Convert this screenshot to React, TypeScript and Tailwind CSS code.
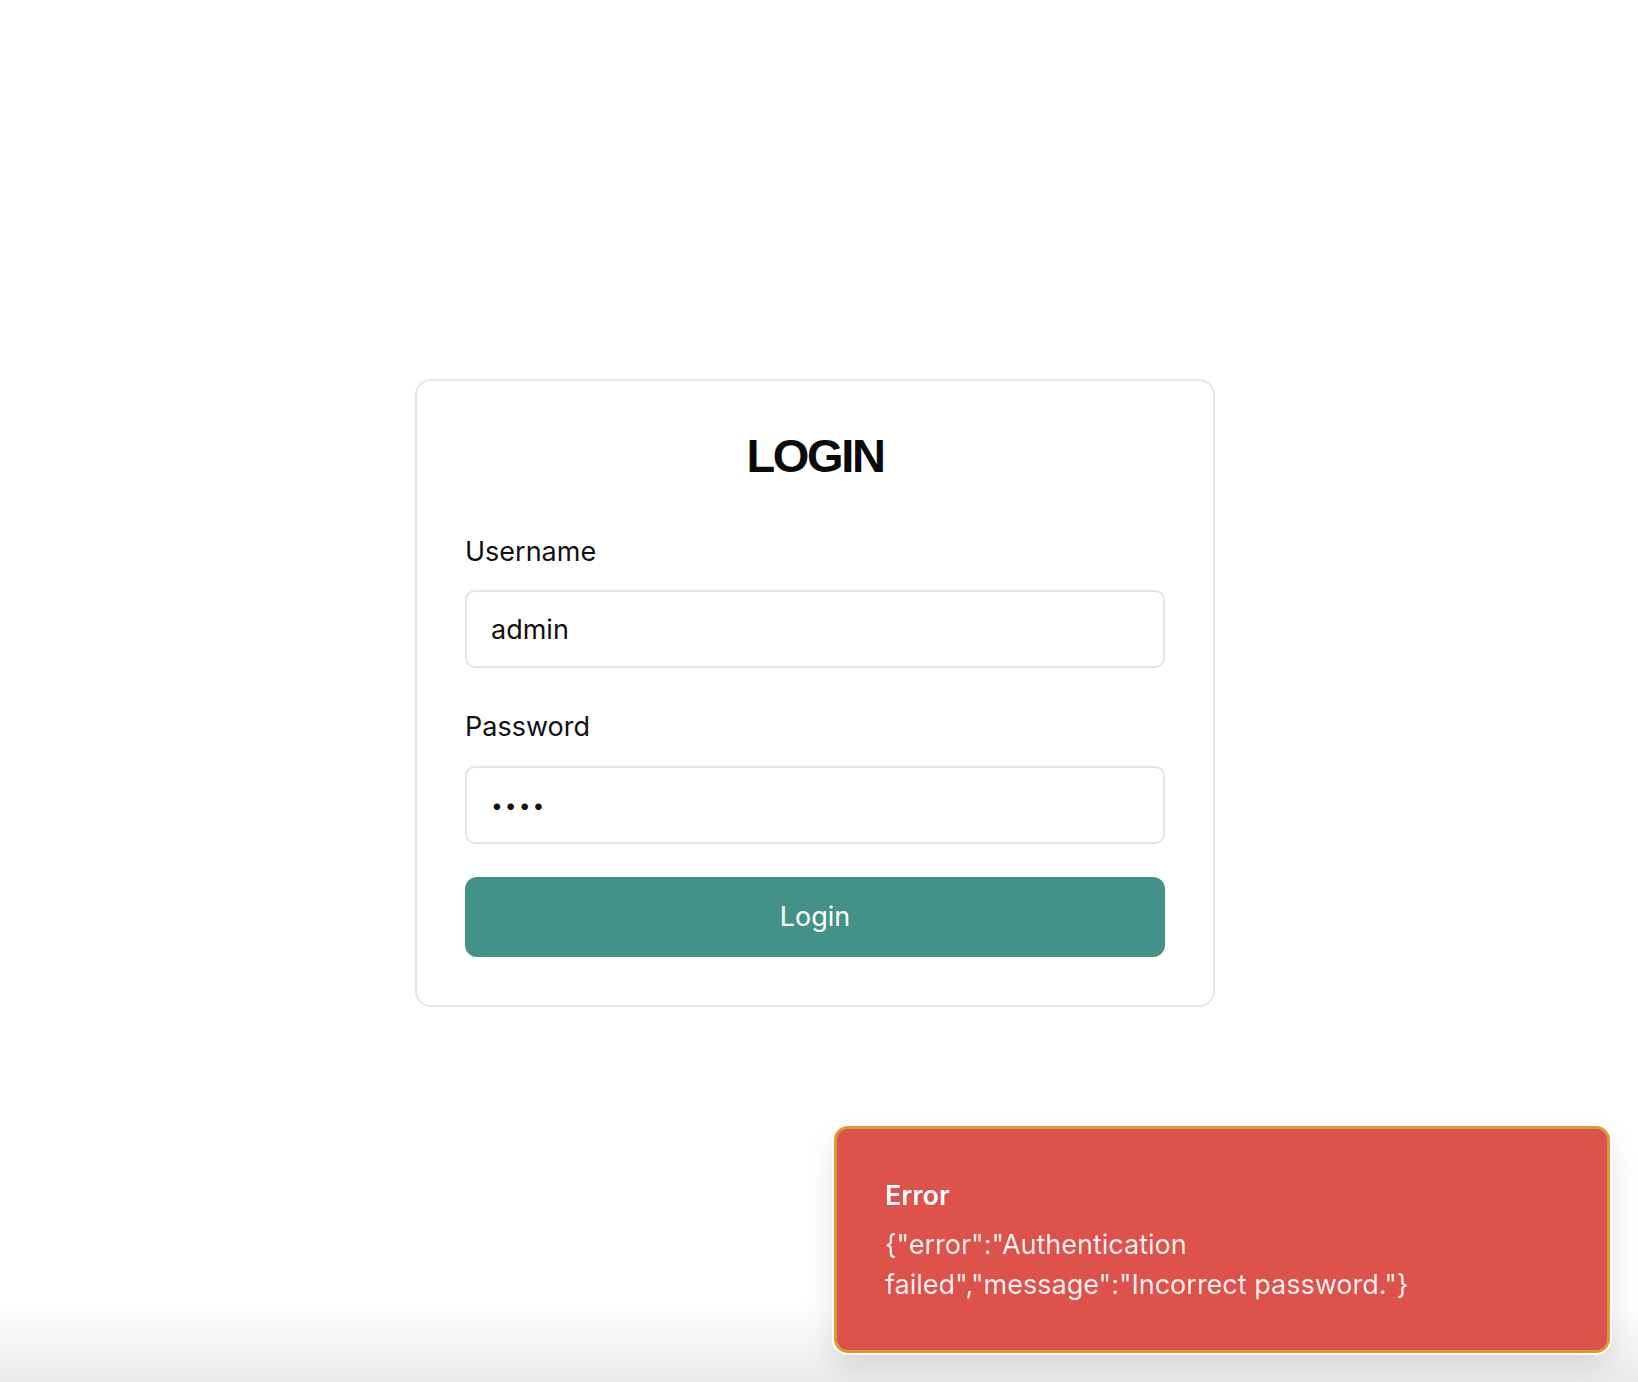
import React from "react";

export default function App() {
  return (
    <div
      className="relative h-screen w-full overflow-hidden bg-white"
      style={{ fontFamily: "Inter, 'Noto Sans', sans-serif" }}
    >
      <div className="flex h-full w-full items-center justify-center pr-[8px] pt-[4px]">
        <div className="w-[800px] rounded-[16px] border-2 border-[#e6e6e6] bg-white p-12">
          <h1
            className="mt-[2px] text-center text-[47px] font-bold leading-[50px] tracking-[-0.05em] text-[#0a0a0a]"
            style={{ fontFamily: "'Liberation Sans', Arial, sans-serif" }}
          >
            LOGIN
          </h1>
          <label className="mt-[55px] block text-[27px] leading-[32px] text-[#111111]">
            Username
          </label>
          <input
            type="text"
            defaultValue="admin"
            className="mt-[22px] block h-[78px] w-full rounded-[10px] border-2 border-[#e4e4e4] bg-white px-6 text-[27px] text-[#111111] outline-none"
          />
          <label className="mt-[43px] block text-[27px] leading-[32px] text-[#111111]">
            Password
          </label>
          <input
            type="password"
            defaultValue="abcd"
            className="mt-[23px] block h-[78px] w-full rounded-[10px] border-2 border-[#e4e4e4] bg-white px-6 text-[21px] tracking-[2px] text-[#111111] outline-none"
          />
          <button
            type="button"
            className="mt-[33px] flex h-[80px] w-full items-center justify-center rounded-[12px] bg-[#43928a] text-[27px] text-white"
          >
            Login
          </button>
        </div>
      </div>

      <div className="pointer-events-none fixed inset-x-0 bottom-0 h-[80px] bg-linear-to-b from-[#ffffff00] to-[#ebebeb]" />

      <div className="fixed bottom-[29px] right-[28px] w-[776px] rounded-[14px] border-[3px] border-[#dc9a36] bg-[#de524c] pb-[45px] pl-12 pr-[64px] pt-[49px] text-white shadow-[0_0_0_2px_#ffffff,0_14px_30px_rgba(0,0,0,0.12)]">
        <div className="text-[27px] font-semibold leading-[36px]">Error</div>
        <div className="mt-[11px] text-[27px] leading-[40px] text-[#fdf0ef]">
          {'{"error":"Authentication failed","message":"Incorrect password."}'}
        </div>
      </div>
    </div>
  );
}
